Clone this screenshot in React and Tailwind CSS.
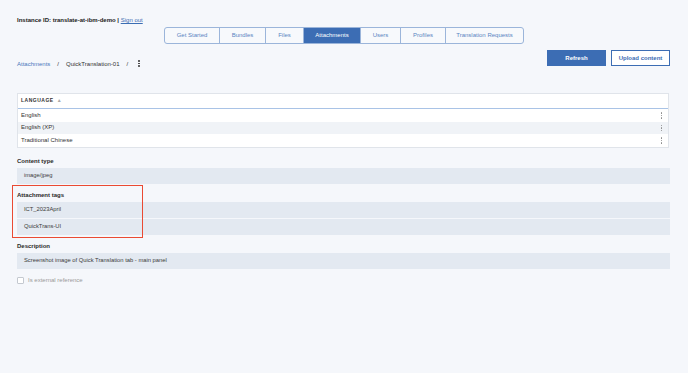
const TABS = [
  { label: 'Get Started', w: 'w-[54px]' },
  { label: 'Bundles', w: 'w-[46px]' },
  { label: 'Files', w: 'w-[38px]' },
  { label: 'Attachments', w: 'w-[57px]', active: true },
  { label: 'Users', w: 'w-[40px]' },
  { label: 'Profiles', w: 'w-[45px]' },
  { label: 'Translation Requests', w: 'w-[78px]' },
];

const LANGS = ['English', 'English (XP)', 'Traditional Chinese'];

function Kebab({ className = '' }) {
  return (
    <span className={`flex flex-col items-center gap-[1px] ${className}`}>
      <span className="w-[1.5px] h-[1.5px] rounded-full bg-current" />
      <span className="w-[1.5px] h-[1.5px] rounded-full bg-current" />
      <span className="w-[1.5px] h-[1.5px] rounded-full bg-current" />
    </span>
  );
}

function Field({ children }) {
  return (
    <div className="h-[16px] bg-[#e3e9f1] flex items-center pl-[7px] text-[5.8px] text-[#3a3a3a]">
      {children}
    </div>
  );
}

function Label({ children }) {
  return <div className="text-[6px] leading-[7px] font-bold text-[#2a2a2a]">{children}</div>;
}

export default function App() {
  return (
    <div className="relative w-[688px] h-[373px] bg-[#f5f7fb] font-['Liberation_Sans',Arial,sans-serif] overflow-hidden">
      <div className="pl-[17px] pr-[18px] pt-[17px]">
        {/* Instance line */}
        <div className="text-[6px] leading-[7px] text-[#222]">
          <span className="font-bold">Instance ID: translate-at-ibm-demo | </span>
          <span className="text-[#3b6db3] underline">Sign out</span>
        </div>

        {/* Tabs */}
        <div className="flex justify-center mt-[3px] -ml-[17px] -mr-[18px]">
          <div className="flex h-[17px] border border-[#9bb5da] rounded-[3px] overflow-hidden bg-[#f7f9fc]">
            {TABS.map((t, i) => (
              <div
                key={t.label}
                className={`${t.w} flex items-center justify-center text-[6px] ${
                  i > 0 ? 'border-l border-[#9bb5da]' : ''
                } ${t.active ? 'bg-[#3c6db4] text-white' : 'text-[#5a85c2]'}`}
              >
                {t.label}
              </div>
            ))}
          </div>
        </div>

        {/* Breadcrumb + actions */}
        <div className="flex justify-between items-start mt-[6px]">
          <div className="flex items-center text-[6px] pt-[10px] text-[#333]">
            <span className="text-[#4a78bb]">Attachments</span>
            <span className="ml-[7px]">/</span>
            <span className="ml-[7px]">QuickTranslation-01</span>
            <span className="ml-[7px]">/</span>
            <Kebab className="ml-[10px] text-[#333] mt-[-2px]" />
          </div>
          <div className="flex gap-[5px]">
            <div className="w-[59px] h-[16px] bg-[#3c6db4] text-white text-[6px] font-bold flex items-center justify-center">
              Refresh
            </div>
            <div className="w-[59px] h-[16px] bg-white border border-[#3c6db4] text-[#3c6db4] text-[6px] font-bold flex items-center justify-center">
              Upload content
            </div>
          </div>
        </div>

        {/* Table */}
        <div className="mt-[24px] mr-[1px] bg-white border border-[#e0e4ea]">
          <div className="h-[15px] border-b border-[#a9c3e6] flex items-center pl-[3px] gap-[3px]">
            <span className="text-[5px] font-bold tracking-[0.5px] text-[#333]">LANGUAGE</span>
            <span className="text-[5px] text-[#aaa]">▲</span>
          </div>
          {LANGS.map((l, i) => (
            <div
              key={l}
              className={`h-[12.5px] flex items-center justify-between pl-[3px] pr-[6px] text-[6px] text-[#333] ${
                i === 1 ? 'bg-[#f0f3f7]' : 'bg-white'
              }`}
            >
              <span>{l}</span>
              <Kebab className="text-[#888]" />
            </div>
          ))}
        </div>

        {/* Content type */}
        <div className="mt-[10px]">
          <Label>Content type</Label>
          <div className="mt-[3px]">
            <Field>image/jpeg</Field>
          </div>
        </div>

        {/* Attachment tags */}
        <div className="mt-[8px]">
          <Label>Attachment tags</Label>
          <div className="mt-[3px] flex flex-col gap-[1px]">
            <Field>ICT_2023April</Field>
            <Field>QuickTrans-UI</Field>
          </div>
        </div>

        {/* Description */}
        <div className="mt-[8px]">
          <Label>Description</Label>
          <div className="mt-[3px]">
            <Field>Screenshot image of Quick Translation tab - main panel</Field>
          </div>
        </div>

        {/* Checkbox */}
        <div className="mt-[7px] flex items-center gap-[4px]">
          <div className="w-[7px] h-[7px] bg-white border border-[#c4c9d0] rounded-[1px]" />
          <span className="text-[6px] text-[#9a9a9a]">Is external reference</span>
        </div>
      </div>

      {/* Annotation box */}
      <div className="absolute left-[12px] top-[185px] w-[131px] h-[53px] border-[1.5px] border-[#ea4a33]" />
    </div>
  );
}
